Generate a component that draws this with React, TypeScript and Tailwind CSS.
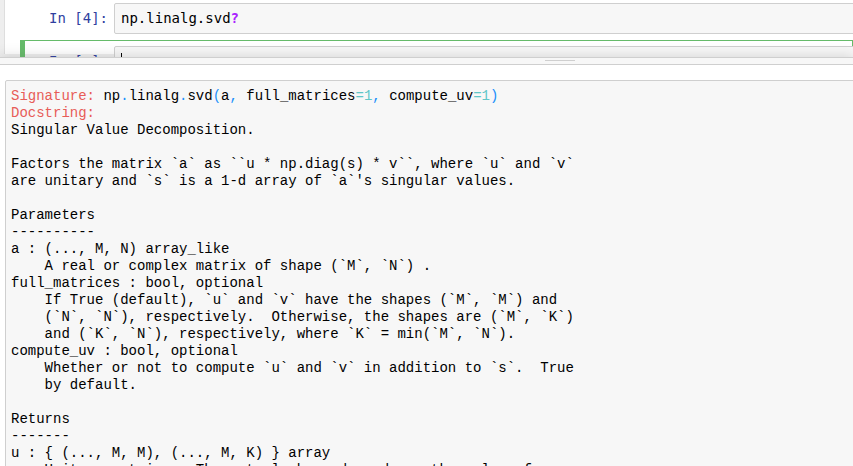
const mono = "font-['DejaVu_Sans_Mono',monospace]";
const pagerFont = "font-['Liberation_Mono','Courier_New',monospace]";

const docLines = [
  "Singular Value Decomposition.",
  "",
  "Factors the matrix `a` as ``u * np.diag(s) * v``, where `u` and `v`",
  "are unitary and `s` is a 1-d array of `a`'s singular values.",
  "",
  "Parameters",
  "----------",
  "a : (..., M, N) array_like",
  "    A real or complex matrix of shape (`M`, `N`) .",
  "full_matrices : bool, optional",
  "    If True (default), `u` and `v` have the shapes (`M`, `M`) and",
  "    (`N`, `N`), respectively.  Otherwise, the shapes are (`M`, `K`)",
  "    and (`K`, `N`), respectively, where `K` = min(`M`, `N`).",
  "compute_uv : bool, optional",
  "    Whether or not to compute `u` and `v` in addition to `s`.  True",
  "    by default.",
  "",
  "Returns",
  "-------",
  "u : { (..., M, M), (..., M, K) } array",
  "    Unitary matrices. The actual shape depends on the value of",
  "    ``full_matrices``. Only returned when ``compute_uv`` is True.",
];

const Cell = ({
  selected,
  prompt,
  children,
}: {
  selected?: boolean;
  prompt: string;
  children: React.ReactNode;
}) => (
  <div
    className={`flex border border-l-[5px] p-[5px] ${
      selected ? "border-[#66BB6A]" : "border-transparent"
    }`}
  >
    <div
      className={`w-[84px] shrink-0 flex items-center justify-end pr-[6px] text-[14px] text-[#303F9F] whitespace-pre ${mono}`}
    >
      {prompt}
    </div>
    <div
      className={`h-[31px] w-[760px] shrink-0 rounded-[2px] border border-[#cfcfcf] bg-[#f7f7f7] px-[6px] flex items-center text-[14px] text-black ${mono}`}
    >
      {children}
    </div>
  </div>
);

const App = () => {
  return (
    <div className="w-[853px] h-[466px] overflow-hidden bg-white flex flex-col">
      <div className="h-[57px] shrink-0 overflow-hidden bg-[#eeeeee] pl-[4px]">
        <div className="h-full bg-white border-l border-[#dedede] pl-[15px]">
          <div className="-mt-[3px] flex flex-col">
            <Cell prompt="In [4]:">
              np.linalg.svd<span className="text-[#AA22FF] font-bold">?</span>
            </Cell>
            <Cell selected prompt="In [ ]:">
              <span className="block w-px h-[17px] bg-black" />
            </Cell>
          </div>
        </div>
      </div>

      <div className="relative z-10 flex-1 bg-white shadow-[0_0_12px_1px_rgba(87,87,87,0.2)]">
        <div className="h-[8px] border-y border-[#cfcfcf] bg-[#f7f7f7] pt-[2px]">
          <div className="ml-[545px] w-[30px] border-t border-[#cfcfcf]" />
        </div>
        <div className="pl-[5px] pt-[15px]">
          <div
            className={`w-[900px] rounded-[2px] border border-[#cfcfcf] bg-[#f7f7f7] pl-[5px] pt-[7px] text-[14px] leading-[17px] text-black whitespace-pre ${pagerFont}`}
          >
            <div>
              <span className="text-[#E75C58]">Signature:</span> np
              <span className="text-[#208FFB]">.</span>linalg
              <span className="text-[#208FFB]">.</span>svd
              <span className="text-[#208FFB]">(</span>a
              <span className="text-[#208FFB]">,</span> full_matrices
              <span className="text-[#60C6C8]">=1</span>
              <span className="text-[#208FFB]">,</span> compute_uv
              <span className="text-[#60C6C8]">=1</span>
              <span className="text-[#208FFB]">)</span>
            </div>
            <div className="text-[#E75C58]">Docstring:</div>
            {docLines.map((line, i) => (
              <div key={i}>{line || " "}</div>
            ))}
          </div>
        </div>
      </div>
    </div>
  );
};

export default App;
